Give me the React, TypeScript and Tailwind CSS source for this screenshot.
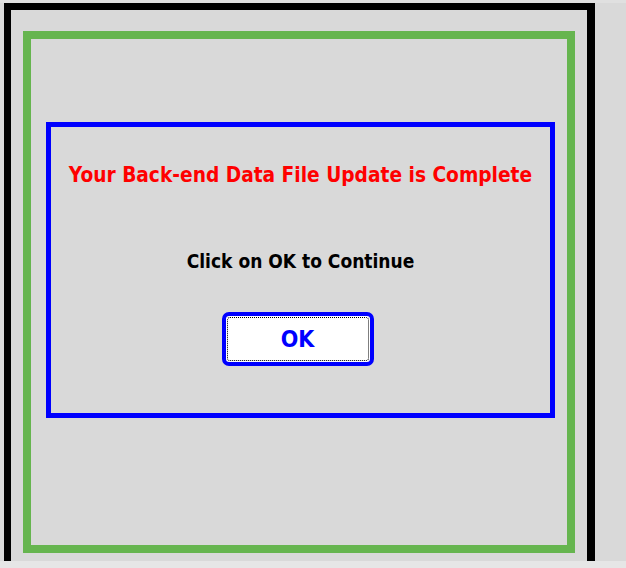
export default function App() {
  const font = { fontFamily: 'Tahoma, "DejaVu Sans Condensed", "DejaVu Sans", sans-serif' }
  return (
    <div className="w-[626px] h-[568px] bg-[#d9d9d9] flex flex-col overflow-hidden" style={font}>
      <div className="h-[3px] bg-[#e0e0e0]" />
      <div className="flex-1 flex">
        <div className="ml-[4px] w-[591px] h-full border-t-[7px] border-l-[7px] border-r-[8px] border-black bg-[#d9d9d9]">
          <div className="ml-[12px] mt-[21px] w-[552px] h-[522px] border-[8px] border-[#66b54f] pt-[83px] pl-[15px]">
            <div className="w-[509px] h-[296px] border-[5px] border-[#0000ff] flex flex-col items-center">
              <p className="mt-[36px] text-[20.7px] leading-[24px] font-bold text-[#ff0000]">
                Your Back-end Data File Update is Complete
              </p>
              <p className="mt-[63px] text-[19px] leading-[22px] font-bold text-black">
                Click on OK to Continue
              </p>
              <button className="mt-[40px] mr-[6px] w-[152px] h-[54px] rounded-[7px] border-[4px] border-[#0000ff] bg-white p-[1px]">
                <span className="flex h-full w-full items-center justify-center rounded-[3px] border border-dotted border-black text-[23px] font-bold text-[#0000ff]">
                  OK
                </span>
              </button>
            </div>
          </div>
        </div>
      </div>
      <div className="h-[7px] bg-[#e6e6e6]" />
    </div>
  )
}
